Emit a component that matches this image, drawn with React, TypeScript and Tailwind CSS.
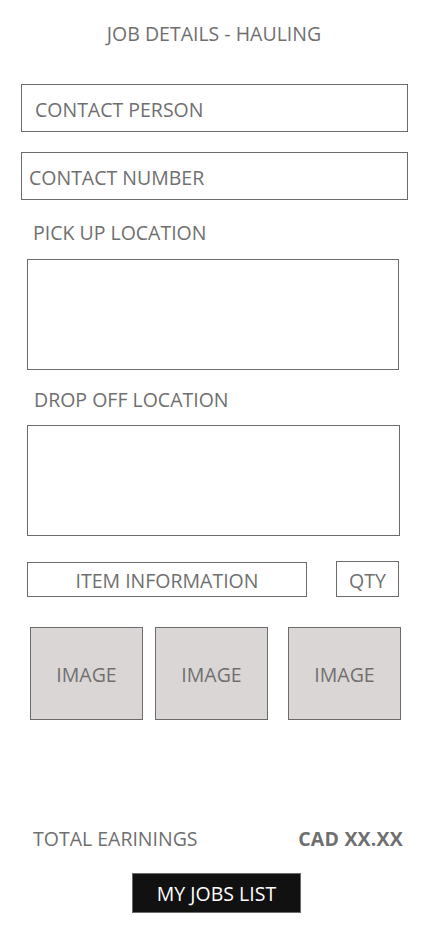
import React from "react";

const font = { fontFamily: '"Open Sans", "Noto Sans", sans-serif' };

const ImageBox: React.FC<{ className?: string }> = ({ className }) => (
  <div
    className={
      "w-[113px] h-[93px] border border-[#6b6b6b] bg-[#dbd6d6] flex items-center justify-center pt-[3px] text-[19.5px] text-[#6f6f6f] " +
      (className ?? "")
    }
  >
    IMAGE
  </div>
);

export default function App() {
  return (
    <div className="w-[428px] min-h-[926px] bg-white flex flex-col text-[#6f6f6f]" style={font}>
      <h1 className="pt-[20px] h-[56px] text-center text-[19.5px] leading-[28px]">
        JOB DETAILS - HAULING
      </h1>

      <div className="mt-[28px] ml-[21px] w-[387px] h-[48px] border border-[#6b6b6b] flex items-center pl-[13px] pt-[4px] text-[19.5px]">
        CONTACT PERSON
      </div>

      <div className="mt-[20px] ml-[21px] w-[387px] h-[48px] border border-[#6b6b6b] flex items-center pl-[7px] pt-[3px] text-[19.5px]">
        CONTACT NUMBER
      </div>

      <div className="mt-[18px] ml-[33px] h-[28px] text-[19.5px] leading-[28px] pt-[1px]">PICK UP LOCATION</div>
      <div className="mt-[13px] ml-[27px] w-[372px] h-[111px] border border-[#6b6b6b]" />

      <div className="mt-[16px] ml-[34px] h-[28px] text-[19.5px] leading-[28px]">DROP OFF LOCATION</div>
      <div className="mt-[11px] ml-[27px] w-[373px] h-[111px] border border-[#6b6b6b]" />

      <div className="mt-[26px] ml-[27px] flex items-start">
        <div className="w-[280px] h-[35px] border border-[#6b6b6b] flex items-center justify-center pt-[3px] text-[19.5px]">
          ITEM INFORMATION
        </div>
        <div className="ml-[29px] -mt-[1px] w-[63px] h-[36px] border border-[#6b6b6b] flex items-center justify-center pt-[3px] text-[19.5px]">
          QTY
        </div>
      </div>

      <div className="mt-[30px] ml-[30px] flex">
        <ImageBox />
        <ImageBox className="ml-[12px]" />
        <ImageBox className="ml-[20px]" />
      </div>

      <div className="mt-[105px] pl-[33px] pr-[25px] h-[28px] flex items-center justify-between text-[19.5px] leading-[28px]">
        <span>TOTAL EARININGS</span>
        <span className="font-bold tracking-[0.2px]">CAD XX.XX</span>
      </div>

      <div className="mt-[20px] flex justify-center">
        <button className="ml-[5px] w-[169px] h-[40px] bg-[#111111] border border-[#6b6b6b] text-white text-[19.5px] pt-[1px]">
          MY JOBS LIST
        </button>
      </div>
    </div>
  );
}
